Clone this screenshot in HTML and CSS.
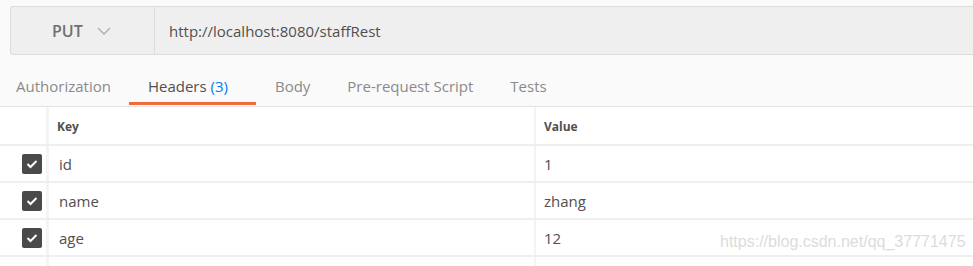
FILE: index.html
```html
<!DOCTYPE html>
<html lang="en">
<head>
    <meta charset="UTF-8">
    <title>PUT staffRest</title>
    <link rel="stylesheet" href="styles.css">
</head>
<body>
    <div class="url-bar">
        <div class="method">
            <span>PUT</span>
            <svg class="chevron" width="14" height="8" viewBox="0 0 14 8"><path d="M1 1 L7 7 L13 1" fill="none" stroke="#b3b3b3" stroke-width="1.5"/></svg>
        </div>
        <div class="url">http://localhost:8080/staffRest</div>
    </div>

    <nav class="tabs">
        <div class="tab first">Authorization</div>
        <div class="tab active">Headers <span class="count">(3)</span></div>
        <div class="tab">Body</div>
        <div class="tab">Pre-request Script</div>
        <div class="tab">Tests</div>
    </nav>

    <div class="table">
        <div class="row head">
            <div class="cell check"></div>
            <div class="cell key">Key</div>
            <div class="cell value">Value</div>
        </div>
        <div class="row">
            <div class="cell check"><span class="box"><svg width="12" height="10" viewBox="0 0 12 10"><path d="M1.5 5 L4.5 8 L10.5 2" fill="none" stroke="#fff" stroke-width="2"/></svg></span></div>
            <div class="cell key">id</div>
            <div class="cell value">1</div>
        </div>
        <div class="row">
            <div class="cell check"><span class="box"><svg width="12" height="10" viewBox="0 0 12 10"><path d="M1.5 5 L4.5 8 L10.5 2" fill="none" stroke="#fff" stroke-width="2"/></svg></span></div>
            <div class="cell key">name</div>
            <div class="cell value">zhang</div>
        </div>
        <div class="row">
            <div class="cell check"><span class="box"><svg width="12" height="10" viewBox="0 0 12 10"><path d="M1.5 5 L4.5 8 L10.5 2" fill="none" stroke="#fff" stroke-width="2"/></svg></span></div>
            <div class="cell key">age</div>
            <div class="cell value">12 <span class="watermark">https://blog.csdn.net/qq_37771475</span></div>
        </div>
        <div class="row">
            <div class="cell check"></div>
            <div class="cell key"></div>
            <div class="cell value"></div>
        </div>
    </div>
</body>
</html>
```

FILE: styles.css
```css
* {
    margin: 0;
    padding: 0;
    box-sizing: border-box;
}
body {
    font-family: "Open Sans", sans-serif;
    background: #fafafa;
    color: #505050;
    width: 973px;
    height: 266px;
    overflow: hidden;
    padding-top: 6px;
}
.url-bar {
    margin-left: 10px;
    height: 49px;
    display: flex;
    background: #efefef;
    border: 1px solid #dcdcdc;
    border-right: none;
    border-radius: 3px 0 0 3px;
}
.method {
    width: 144px;
    border-right: 1px solid #dcdcdc;
    display: flex;
    align-items: center;
    padding-left: 41px;
    font-size: 16px;
    font-weight: 600;
    color: #707070;
}
.chevron {
    margin-left: 14px;
}
.url {
    display: flex;
    align-items: center;
    padding-left: 14px;
    font-size: 15px;
    color: #505050;
}
.tabs {
    display: flex;
    height: 52px;
    border-bottom: 1px solid #e2e2e2;
    font-size: 15px;
    color: #8a8a8a;
}
.tab {
    padding: 21px 18px 0 19px;
    border-bottom: 3px solid transparent;
    margin-bottom: 1px;
}
.tab.first {
    padding-left: 16px;
}
.tab.active {
    color: #505050;
    padding-right: 28px;
    border-bottom-color: #f26b3a;
}
.count {
    color: #097bed;
}
.table {
    background: #fff;
}
.row {
    display: flex;
    height: 37px;
    border-bottom: 2px solid #efefef;
}
.row.head {
    height: 39px;
    font-weight: 700;
}
.cell {
    display: flex;
    align-items: center;
    font-size: 15px;
}
.head .cell {
    font-size: 12px;
    padding-top: 1px;
}
.check {
    width: 49px;
    border-right: 3px solid #f4f4f4;
    padding-left: 22px;
}
.key {
    width: 487px;
    border-right: 2px solid #f4f4f4;
    padding-left: 10px;
}
.head .key {
    padding-left: 8px;
}
.value {
    flex: 1;
    padding-left: 8px;
    position: relative;
}
.box {
    width: 20px;
    height: 20px;
    border-radius: 2px;
    background: #4a4a4a;
    display: flex;
    align-items: center;
    justify-content: center;
}
.watermark {
    position: absolute;
    left: 184px;
    top: 13px;
    font-family: "Liberation Sans", Arial, sans-serif;
    font-size: 16px;
    color: #dcdcdc;
}
```
